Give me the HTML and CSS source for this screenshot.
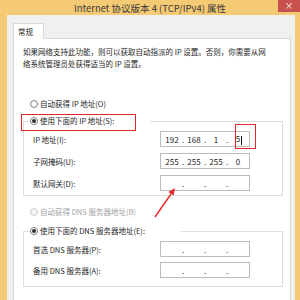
FILE: index.html
```html
<!DOCTYPE html>
<html lang="zh-CN">
<head>
    <meta charset="UTF-8">
    <meta name="viewport" content="width=device-width, initial-scale=1.0">
    <title>Internet 协议版本 4 (TCP/IPv4) 属性</title>
    <link rel="stylesheet" href="styles.css">
</head>
<body>
    <div class="window">
        <div class="titlebar">
            <span></span>
            <span class="title">Internet 协议版本 4 (TCP/IPv4) 属性</span>
            <span class="close">×</span>
        </div>
        <div class="frame">
            <div class="tab">常规</div>
            <div class="panel">
                <p class="desc">如果网络支持此功能，则可以获取自动指派的 IP 设置。否则，你需要从网<br>络系统管理员处获得适当的 IP 设置。</p>

                <div class="option auto-ip"><span class="dot"></span>自动获得 IP 地址(O)</div>

                <fieldset class="group">
                    <legend><span class="option"><span class="dot on"></span>使用下面的 IP 地址(S):</span></legend>
                    <div class="fields">
                        <div class="row">
                            <span class="label">IP 地址(I):</span>
                            <div class="ip">
                                <span class="oct">192</span><span class="sep">.</span><span class="oct">168</span><span class="sep">.</span><span class="oct">1</span><span class="sep">.</span><span class="oct">5<i class="caret"></i></span>
                            </div>
                        </div>
                        <div class="row">
                            <span class="label">子网掩码(U):</span>
                            <div class="ip">
                                <span class="oct">255</span><span class="sep">.</span><span class="oct">255</span><span class="sep">.</span><span class="oct">255</span><span class="sep">.</span><span class="oct">0</span>
                            </div>
                        </div>
                        <div class="row">
                            <span class="label">默认网关(D):</span>
                            <div class="ip">
                                <span class="oct"></span><span class="sep">.</span><span class="oct"></span><span class="sep">.</span><span class="oct"></span><span class="sep">.</span><span class="oct"></span>
                            </div>
                        </div>
                    </div>
                </fieldset>

                <div class="option auto-dns disabled"><span class="dot"></span>自动获得 DNS 服务器地址(B)</div>

                <fieldset class="group dns">
                    <legend><span class="option"><span class="dot on"></span>使用下面的 DNS 服务器地址(E):</span></legend>
                    <div class="fields">
                        <div class="row">
                            <span class="label">首选 DNS 服务器(P):</span>
                            <div class="ip">
                                <span class="oct"></span><span class="sep">.</span><span class="oct"></span><span class="sep">.</span><span class="oct"></span><span class="sep">.</span><span class="oct"></span>
                            </div>
                        </div>
                        <div class="row">
                            <span class="label">备用 DNS 服务器(A):</span>
                            <div class="ip">
                                <span class="oct"></span><span class="sep">.</span><span class="oct"></span><span class="sep">.</span><span class="oct"></span><span class="sep">.</span><span class="oct"></span>
                            </div>
                        </div>
                    </div>
                </fieldset>
            </div>
        </div>

        <!-- red annotations drawn over the dialog -->
        <div class="mark mark-radio"></div>
        <div class="mark mark-octet"></div>
        <svg class="arrow" width="30" height="36" viewBox="0 0 30 36">
            <line x1="5" y1="32" x2="21" y2="9" stroke="#e8262b" stroke-width="1.4"/>
            <polygon points="25,3 23.6,10.6 18.4,7" fill="#e8262b"/>
        </svg>
    </div>
</body>
</html>
```

FILE: styles.css
```css
body {
    margin: 0;
    font-family: "Noto Sans CJK SC", "Noto Sans", sans-serif;
    color: #1e1e1e;
}
.window {
    position: relative;
    width: 300px;
    height: 300px;
    overflow: hidden;
    background-color: #f4ca74;
    display: flex;
    flex-direction: column;
}
.titlebar {
    height: 15px;
    display: grid;
    grid-template-columns: 1fr auto 1fr;
}
.title {
    font-size: 9.5px;
    line-height: 16px;
    color: #3a3a3a;
    white-space: nowrap;
}
.close {
    justify-self: end;
    width: 22px;
    height: 12px;
    background-color: #c9514d;
    color: white;
    font-size: 9px;
    line-height: 12px;
    text-align: center;
}
.frame {
    flex-grow: 1;
    margin: 0 5px 0 7px;
    padding: 8px 0 0 6px;
    background-color: #f0f0f0;
    overflow: hidden;
}
.tab {
    width: 31px;
    height: 16px;
    box-sizing: border-box;
    margin-bottom: -1px;
    padding-left: 4px;
    border: 1px solid #d9d9d9;
    border-bottom: none;
    background-color: white;
    position: relative;
    font-size: 7.5px;
    line-height: 15px;
}
.panel {
    width: 278px;
    height: 280px;
    box-sizing: border-box;
    padding: 7px 0 0 9px;
    border: 1px solid #d9d9d9;
    background-color: white;
    font-size: 7.5px;
}
.desc {
    margin: 0;
    line-height: 12px;
    white-space: nowrap;
}
.option {
    display: flex;
    align-items: center;
    height: 12px;
    line-height: 12px;
    white-space: nowrap;
}
.auto-ip {
    margin-top: 28px;
    padding-left: 7px;
}
.auto-dns {
    margin-top: 10px;
    padding-left: 7px;
}
.disabled {
    color: #a2a2a2;
}
.dot {
    width: 8px;
    height: 8px;
    box-sizing: border-box;
    margin-right: 2px;
    border: 1px solid #7d7d7d;
    border-radius: 50%;
    background-color: white;
    display: flex;
    align-items: center;
    justify-content: center;
}
.disabled .dot {
    border-color: #cdcdcd;
    background-color: #f4f4f4;
}
.dot.on::after {
    content: "";
    width: 4px;
    height: 4px;
    border-radius: 50%;
    background-color: #2c2c2c;
}
.group {
    width: 260px;
    box-sizing: border-box;
    margin: 5px 0 0 0;
    padding: 0 0 4px 9px;
    border: 1px solid #dedede;
    min-inline-size: 0;
}
.group.dns {
    margin-top: 7px;
    padding-bottom: 8px;
}
.group legend {
    margin-left: -3px;
    padding: 0 36px 0 0;
    height: 12px;
}
.fields {
    display: flex;
    flex-direction: column;
    gap: 6px;
    padding-top: 4px;
}
.dns .fields {
    gap: 5px;
}
.row {
    display: flex;
    align-items: center;
    height: 16px;
}
.label {
    width: 127px;
    white-space: nowrap;
}
.ip {
    width: 90px;
    height: 16px;
    box-sizing: border-box;
    padding-left: 2px;
    border: 1px solid #bcbcbc;
    display: flex;
    align-items: center;
    font-size: 8px;
    color: #222;
}
.oct {
    width: 18px;
    text-align: center;
}
.sep {
    width: 4px;
    text-align: center;
}
.caret {
    display: inline-block;
    width: 1px;
    height: 9px;
    margin-left: 1px;
    margin-right: -2px;
    vertical-align: middle;
    background-color: #111;
}
.mark {
    position: absolute;
    box-sizing: border-box;
    border: 1.5px solid #e3262c;
}
.mark-radio {
    left: 21px;
    top: 114px;
    width: 115px;
    height: 17px;
}
.mark-octet {
    left: 235px;
    top: 124px;
    width: 21px;
    height: 25px;
}
.arrow {
    position: absolute;
    left: 150px;
    top: 185px;
}
```
